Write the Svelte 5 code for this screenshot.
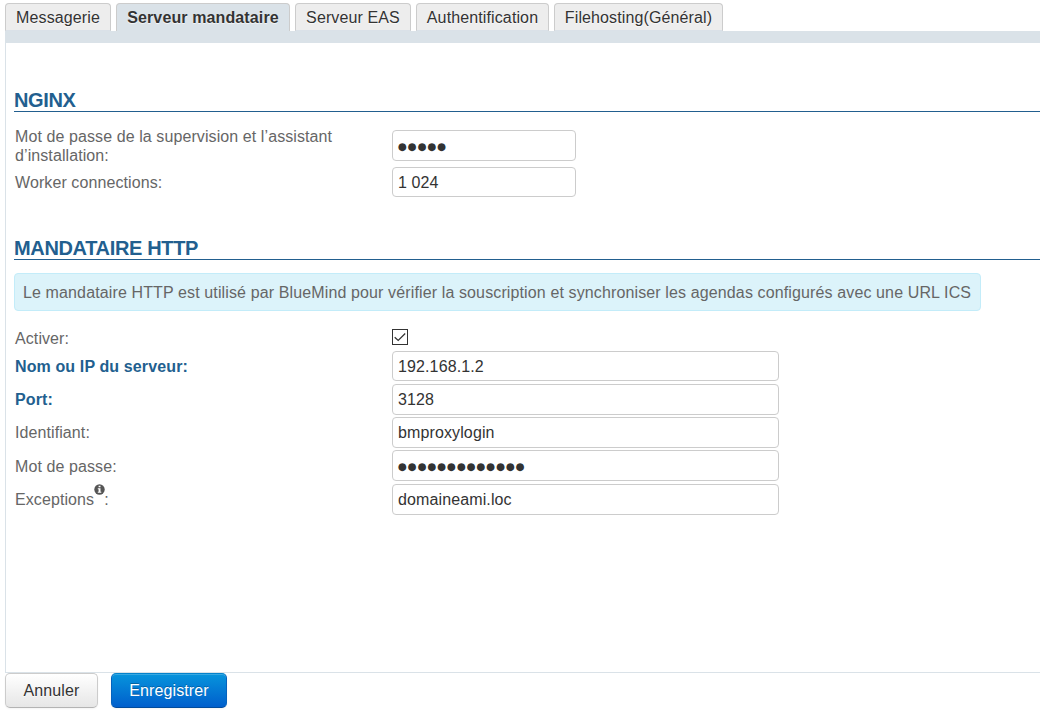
<script>
  const tabs = [
    { label: 'Messagerie', width: 106 },
    { label: 'Serveur mandataire', width: 174, active: true },
    { label: 'Serveur EAS', width: 116 },
    { label: 'Authentification', width: 133 },
    { label: 'Filehosting(Général)', width: 169 }
  ];
  const fields = [
    { label: 'Nom ou IP du serveur', value: '192.168.1.2', required: true, height: 30, gap: 3 },
    { label: 'Port', value: '3128', required: true, height: 31, gap: 2 },
    { label: 'Identifiant', value: 'bmproxylogin', height: 31, gap: 2 },
    { label: 'Mot de passe', value: '●●●●●●●●●●●●●', secret: true, height: 31, gap: 3 },
    { label: 'Exceptions', value: 'domaineami.loc', info: true, height: 31, gap: 0 }
  ];
</script>

<div class="page">
  <nav>
    {#each tabs as tab}
      <div class="tab" class:active={tab.active} style="width:{tab.width}px"><span>{tab.label}</span></div>
    {/each}
  </nav>
  <main>
    <h2 class="nginx">NGINX</h2>
    <div class="row supervision">
      <div class="label">Mot de passe de la supervision et l’assistant<br />d’installation:</div>
      <div class="input short secret">●●●●●</div>
    </div>
    <div class="row worker">
      <div class="label">Worker connections:</div>
      <div class="input short">1 024</div>
    </div>
    <h2 class="http"><span>MANDATAIRE HTTP</span></h2>
    <div class="notice"><span>Le mandataire HTTP est utilisé par BlueMind pour vérifier la souscription et synchroniser les agendas configurés avec une URL ICS</span></div>
    <div class="row enable">
      <div class="label">Activer:</div>
      <svg width="16" height="16" viewBox="0 0 16 16" fill="none">
        <rect x=".5" y=".5" width="15" height="15" stroke="#333" />
        <path d="M2.7 8.2 6.2 11.5 13.2 4.5" stroke="#333" stroke-width="1.25" />
      </svg>
    </div>
    {#each fields as field}
      <div class="row" style="height:{field.height}px;margin-bottom:{field.gap}px">
        <div class="label" class:required={field.required} class:lower={field.secret}>
          {field.label}{#if field.info}<svg class="info" width="11" height="11" viewBox="0 0 11 11">
            <circle cx="5.5" cy="5.5" r="5.2" fill="#555" />
            <path d="M4.6 1.7h1.9v1.5H4.6zM3.8 4.2h2.7v3.6h.8v1H3.8v-1h.8V5.2h-.8z" fill="#fff" />
          </svg>{/if}:
        </div>
        <div class="input" class:secret={field.secret}>{field.value}</div>
      </div>
    {/each}
  </main>
  <footer>
    <button class="cancel">Annuler</button>
    <button class="save">Enregistrer</button>
  </footer>
</div>

<style>
  :global(body) { margin: 0; background: #fff; }
  * { box-sizing: border-box; }
  .page {
    width: 1040px; height: 710px; overflow: hidden; padding: 3px 0 0 5px;
    display: flex; flex-direction: column; letter-spacing: .12px;
    font: 16px/19px "Liberation Sans", Arial, sans-serif; color: #666;
  }
  nav { display: flex; gap: 5px; height: 28px; flex: none; }
  .tab {
    height: 28px; border: 1px solid #ccc; border-bottom-color: #dae1e8; border-radius: 4px 4px 0 0;
    background: #ededed; color: #333; text-align: center; line-height: 27px; white-space: nowrap;
    text-shadow: 0 1px 1px rgba(255, 255, 255, .75);
  }
  .active { background: #dae2e8; font-weight: bold; border-bottom: 0; }
  main {
    height: 642px; flex: none; border-top: 12px solid #dae2e8;
    border-left: 1px solid #dae2e8; border-bottom: 1px solid #dae2e8; padding: 45px 0 0 8px;
  }
  h2 {
    margin: 0; height: 24px; border-bottom: 1px solid #225f8f; color: #225f8f;
    font-size: 20px; line-height: 24px; letter-spacing: -.35px; white-space: nowrap;
  }
  .row { display: flex; align-items: center; padding-left: 1px; }
  .label { width: 377px; flex: none; white-space: nowrap; letter-spacing: .09px; }
  .required { color: #225f8f; font-weight: bold; letter-spacing: .12px; }
  .lower { padding-top: 2px; }
  .input {
    width: 387px; height: 100%; border: 1px solid #ccc; border-radius: 4px;
    padding: 0 5px; display: flex; align-items: center; color: #333; white-space: pre;
  }
  .short { width: 184px; }
  .secret { font: 10.3px "DejaVu Sans", sans-serif; padding: 1px 5px 0; letter-spacing: .83px; }
  .supervision { height: 31px; margin-top: 18px; }
  .worker { height: 30px; margin-top: 6px; }
  .http { margin-top: 39px; }
  .notice {
    width: 967px; height: 38px; margin-top: 13px; border: 1px solid #c3ecf9; border-radius: 4px;
    background: #dcf3fa; padding-left: 8px; line-height: 37px; letter-spacing: .125px; white-space: nowrap;
  }
  .enable { height: 20px; margin-top: 16px; margin-bottom: 4px; }
  .enable .label { padding-top: 2px; }
  .info { height: 11px; margin: -8px -1px 0 0; position: relative; top: -10px; vertical-align: 0; }
  footer { display: flex; gap: 13px; }
  button {
    height: 35px; width: 93px; padding: 0; border: 1px solid #bbb; border-color: #ccc #ccc #b3b3b3; border-radius: 5px;
    background: linear-gradient(#fff, #e6e6e6); color: #333; font: inherit; letter-spacing: .12px;
    box-shadow: inset 0 1px 0 rgba(255, 255, 255, .2), 0 1px 2px rgba(0, 0, 0, .05);
    text-shadow: 0 1px 1px rgba(255, 255, 255, .75);
  }
  .save {
    width: 116px; color: #fff; background: linear-gradient(#0794dc, #005fcc);
    border-color: #0483cc #0562bd #004b9c; text-shadow: 0 -1px 0 rgba(0, 0, 0, .25);
  }
</style>
